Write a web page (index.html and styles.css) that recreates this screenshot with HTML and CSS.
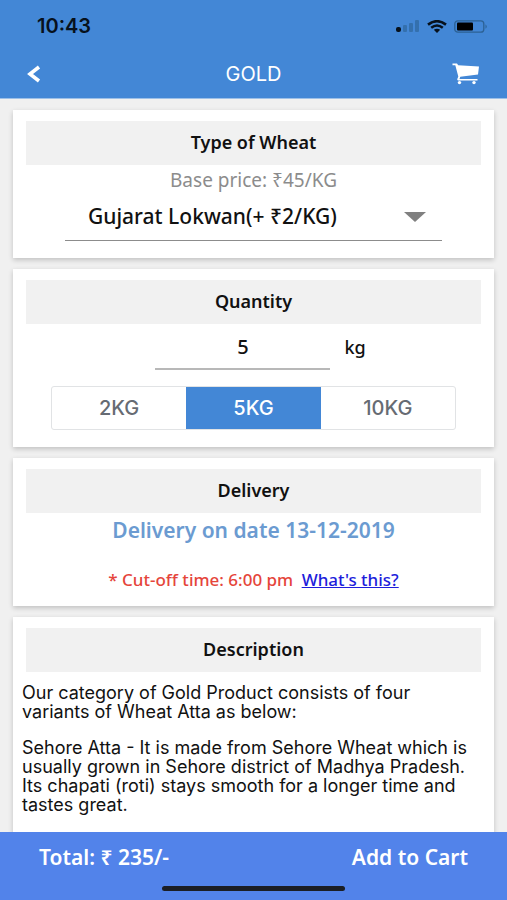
FILE: index.html
```html
<!DOCTYPE html>
<html lang="en">
<head>
<meta charset="utf-8">
<meta name="viewport" content="width=device-width, initial-scale=1">
<title>Gold</title>
<link rel="stylesheet" href="styles.css">
</head>
<body>
<header class="header">
  <div class="status">
    <span class="clock">10:43</span>
    <div class="indicators">
      <svg width="24" height="12" viewBox="0 0 24 12" aria-hidden="true">
        <rect x="0" y="7" width="5" height="5" rx="2" fill="#07111c"/>
        <g fill="#3470ae"><rect x="7" y="5" width="4" height="7" rx="1"/><rect x="13" y="3" width="4" height="9" rx="1"/><rect x="19" y="0" width="4" height="12" rx="1"/></g>
      </svg>
      <svg width="20" height="13" viewBox="0 0 20 13" aria-hidden="true">
        <g fill="none" stroke="#07111c" stroke-width="2.6"><path d="M1 4.6Q10-2.2 19 4.6"/><path d="M4.200 7.700Q10 3.300 15.800 7.700"/></g>
        <path d="M6.800 9.700Q10 7.600 13.200 9.700L10 13Z" fill="#07111c"/>
      </svg>
      <svg width="34" height="13" viewBox="0 0 34 13" aria-hidden="true">
        <rect x=".8" y=".8" width="29" height="11.400" rx="3" fill="none" stroke="#2c6194" stroke-width="1.300"/>
        <rect x="3" y="2.500" width="16" height="8" rx="1" fill="#000"/>
        <path d="M31.500 4.200Q34 6.500 31.500 8.800Z" fill="#2c6194"/>
      </svg>
    </div>
  </div>
  <nav class="nav">
    <button class="icon-button" aria-label="Back">
      <svg width="14" height="18" viewBox="0 0 14 18"><path d="M12 2L3 9l9 7" fill="none" stroke="#fff" stroke-width="3.600"/></svg>
    </button>
    <h1 class="title">GOLD</h1>
    <button class="icon-button" aria-label="Cart">
      <svg width="28" height="22" viewBox="0 0 28 22" fill="#fff"><path d="M.5.500H5L6.200 2.200 27 3.600 26 11.600 8.300 13.800 7.500 15.900H25.500V17.500H6.300Q4.800 17.300 5.300 15.900L6.300 13.500 3.300 2.200H.5Z"/><circle cx="7.500" cy="19.600" r="1.700"/><circle cx="22" cy="19.600" r="1.700"/></svg>
    </button>
  </nav>
</header>

<main class="content">
  <section class="card">
    <h2 class="card-title"><label for="wheat">Type of Wheat</label></h2>
    <p class="base-price">Base price: ₹45/KG</p>
    <div class="select-wrap">
      <select id="wheat" class="select"><option>Gujarat Lokwan(+ ₹2/KG)</option></select>
      <svg class="caret" width="22" height="10" viewBox="0 0 22 10" aria-hidden="true"><path d="M0 0h22L11 10Z" fill="#808080"/></svg>
    </div>
  </section>

  <section class="card">
    <h2 class="card-title">Quantity</h2>
    <div class="amount">
      <input id="amount" class="amount-input" type="text" inputmode="numeric" value="5">
      <label for="amount" class="unit">kg</label>
    </div>
    <div class="segments">
      <button class="segment">2KG</button>
      <button class="segment selected" aria-pressed="true">5KG</button>
      <button class="segment">10KG</button>
    </div>
  </section>

  <section class="card">
    <h2 class="card-title">Delivery</h2>
    <p class="delivery-date">Delivery on date 13-12-2019</p>
    <p class="cutoff">* Cut-off time: 6:00 pm <a class="help" href="#">What's this?</a></p>
  </section>

  <section class="card description">
    <h2 class="card-title">Description</h2>
    <div class="copy">
      <p>Our category of Gold Product consists of four variants of Wheat Atta as below:</p>
      <p>Sehore Atta - It is made from Sehore Wheat which is usually grown in Sehore district of Madhya Pradesh. Its chapati (roti) stays smooth for a longer time and tastes great.</p>
    </div>
  </section>
</main>

<footer class="footer">
  <div class="checkout">
    <span>Total: ₹ 235/-</span>
    <button class="add">Add to Cart</button>
  </div>
  <div class="home-bar"></div>
</footer>
</body>
</html>
```
FILE: styles.css
```css
* { box-sizing: border-box; }

body {
  margin: 0;
  height: 100vh;
  display: flex;
  flex-direction: column;
  background: #f0f0f0;
  color: #111;
  font-family: "Noto Sans", "Open Sans", sans-serif;
}

h1, h2, p { margin: 0; }

button, input, select {
  margin: 0;
  padding: 0;
  border: 0;
  border-radius: 0;
  background: none;
  color: inherit;
  font: inherit;
}

.header {
  flex: none;
  background: #4387d6;
  border-bottom: 1px solid #9dc0e8;
}

.status {
  display: flex;
  justify-content: space-between;
  align-items: center;
  height: 52px;
  padding: 0 19px 0 37px;
}

.clock {
  color: #07111c;
  font: 600 20px/24px Inter, sans-serif;
}

.indicators { display: flex; align-items: center; gap: 7px; }

.nav {
  display: flex;
  justify-content: space-between;
  align-items: center;
  height: 46px;
  padding: 0 27px 3px;
}

.icon-button { display: flex; width: 28px; }

.title {
  color: #fff;
  font: 400 20px/24px Inter, sans-serif;
}

.content {
  flex: 1;
  min-height: 0;
  overflow: hidden;
  display: flex;
  flex-direction: column;
  gap: 11px;
  padding: 11px 13px 0;
}

.card {
  flex: none;
  padding: 11px 13px 17px;
  background: #fff;
  box-shadow: 0 2px 5px rgba(0, 0, 0, .2);
}

.description { padding-bottom: 32px; }

.card-title {
  padding: 9px 0 11px;
  background: #f1f1f1;
  font-size: 18px;
  font-weight: 600;
  line-height: 24px;
  text-align: center;
}

.base-price {
  padding-top: 3px;
  color: #8c8c8c;
  font-size: 19px;
  line-height: 24px;
  text-align: center;
}

.select-wrap {
  position: relative;
  margin: 0 39px;
  border-bottom: 1px solid #8c8c8c;
}

.select {
  appearance: none;
  width: 100%;
  height: 48px;
  padding: 0 40px 0 23px;
  font-size: 21px;
  font-weight: 500;
}

.caret {
  position: absolute;
  top: 20px;
  right: 16px;
  pointer-events: none;
}

.amount {
  display: flex;
  align-items: center;
  justify-content: center;
  gap: 14px;
  padding-left: 14px;
}

.amount-input {
  width: 175px;
  height: 46px;
  border-bottom: 2px solid #b8b8b8;
  font-size: 20px;
  font-weight: 500;
  text-align: center;
}

.unit { font-size: 18px; font-weight: 500; }

.segments {
  display: flex;
  margin: 16px 25px 0;
  border: 1px solid #e1e3e5;
  border-radius: 3px;
}

.segment {
  flex: 1;
  height: 42px;
  color: #666b73;
  font: 500 20px/24px Inter, sans-serif;
}

.segment.selected { background: #4387d6; color: #fff; }

.delivery-date {
  padding-top: 3px;
  color: #6b9bd1;
  font-size: 21px;
  font-weight: 600;
  line-height: 28px;
  text-align: center;
}

.cutoff {
  padding: 25px 0 0;
  margin-bottom: -2px;
  color: #e5453b;
  font-size: 17px;
  font-weight: 500;
  line-height: 22px;
  text-align: center;
}

.help { margin-left: 4px; color: #1d1ddb; }

.copy {
  display: flex;
  flex-direction: column;
  gap: 17px;
  margin: 11px 0 0 -4px;
  font: 400 18px/19px Inter, sans-serif;
}

.footer {
  flex: none;
  padding-bottom: 9px;
  background: #5283ea;
  color: #fff;
  font-size: 21px;
  font-weight: 600;
}

.checkout {
  display: flex;
  justify-content: space-between;
  align-items: center;
  height: 54px;
  padding: 0 39px 4px;
}

.home-bar {
  width: 36%;
  height: 5px;
  margin: 0 auto;
  border-radius: 3px;
  background: #1b1e25;
}
```
